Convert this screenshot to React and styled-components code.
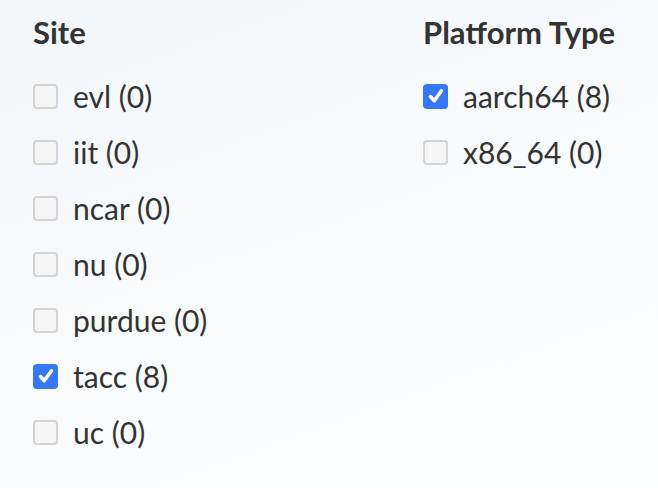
import React from "react";
import styled, { createGlobalStyle } from "styled-components";

const GlobalStyle = createGlobalStyle`
  html, body {
    margin: 0;
    padding: 0;
  }
  body {
    background: linear-gradient(160deg, #f4f7fa 0%, #f8fafc 50%, #fafcfd 100%);
    font-family: Lato, "Noto Sans", sans-serif;
    color: #333;
  }
`;

const filters = [
  {
    title: "Site",
    items: [
      { label: "evl", count: 0 },
      { label: "iit", count: 0 },
      { label: "ncar", count: 0 },
      { label: "nu", count: 0 },
      { label: "purdue", count: 0 },
      { label: "tacc", count: 8, checked: true },
      { label: "uc", count: 0 },
    ],
  },
  {
    title: "Platform Type",
    items: [
      { label: "aarch64", count: 8, checked: true },
      { label: "x86_64", count: 0 },
    ],
  },
];

const CheckMark = () => (
  <svg width="20" height="20" viewBox="0 0 16 16">
    <path
      d="M3.6 8.4 L6.6 11.8 L12.4 3.8"
      fill="none"
      stroke="#fff"
      strokeWidth="2.8"
      strokeLinecap="round"
      strokeLinejoin="round"
    />
  </svg>
);

const App = () => {
  return (
    <>
      <GlobalStyle />
      <Page>
        {filters.map((group) => (
          <Group key={group.title}>
            <Title>{group.title}</Title>
            <List>
              {group.items.map((item) => (
                <Option key={item.label}>
                  <Box checked={item.checked}>{item.checked && <CheckMark />}</Box>
                  {item.label} ({item.count})
                </Option>
              ))}
            </List>
          </Group>
        ))}
      </Page>
    </>
  );
};

const Page = styled.div`
  width: 658px;
  height: 488px;
  box-sizing: border-box;
  padding: 14px 0 0 33px;
  display: grid;
  grid-template-columns: 390px 1fr;
`;
const Group = styled.div`
  display: flex;
  flex-direction: column;
`;
const Title = styled.div`
  font-size: 31px;
  font-weight: 700;
  line-height: 36px;
  color: #333;
`;
const List = styled.div`
  margin-top: 31px;
  display: flex;
  flex-direction: column;
  gap: 26px;
`;
const Option = styled.label`
  display: flex;
  align-items: center;
  gap: 15px;
  height: 30px;
  font-size: 30px;
  line-height: 30px;
  color: #333;
`;
const Box = styled.span`
  flex: none;
  width: 25px;
  height: 25px;
  box-sizing: border-box;
  border-radius: 4px;
  display: flex;
  align-items: center;
  justify-content: center;
  background: ${(props) => (props.checked ? "#3478f6" : "#f6f6f6")};
  border: ${(props) => (props.checked ? "none" : "2px solid #d4d4d4")};
`;

export default App;
